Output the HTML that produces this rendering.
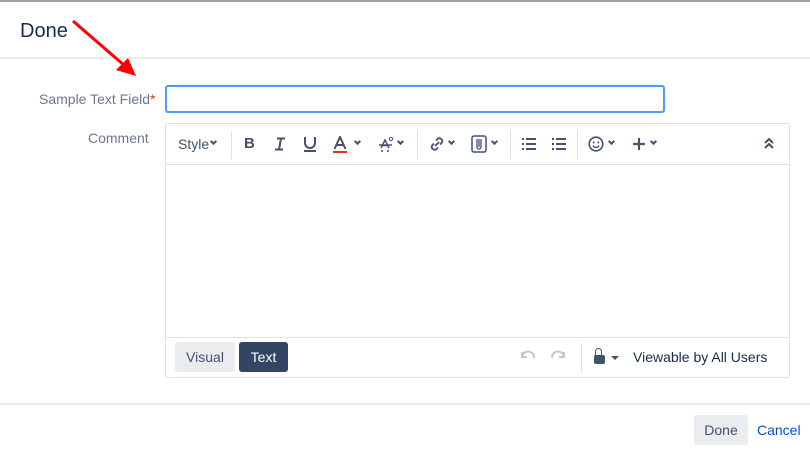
<!DOCTYPE html>
<html><head><style>
*{box-sizing:border-box;margin:0;padding:0}
body{width:810px;height:454px;background:#fff;font-family:"Liberation Sans",sans-serif;position:relative;overflow:hidden;color:#172b4d}
.a{position:absolute}
.ic{position:absolute;font-size:15px;color:#42526e;font-weight:bold}
.sep{position:absolute;width:1px;background:#dfe1e6}
.chev{position:absolute;width:5px;height:5px;border-right:2px solid #42526e;border-bottom:2px solid #42526e;transform:rotate(45deg)}
svg.s{position:absolute}
</style></head><body>
<div class="a" style="left:0;top:0;width:810px;height:2px;background:#9aa0a8"></div>
<div class="a" style="left:20px;top:20px;font-size:20px;color:#172b4d">Done</div>
<div class="a" style="left:0;top:57px;width:810px;height:2px;background:#ebecf0"></div>
<svg class="a" style="left:70px;top:18px" width="70" height="62"><line x1="3" y1="3" x2="55" y2="48" stroke="#f00" stroke-width="3"/><polygon points="66,58 46,52 58,40" fill="#f00"/></svg>
<div class="a" style="left:39px;top:91px;font-size:14px;color:#6b778c">Sample Text Field<span style="color:#de350b">*</span></div>
<div class="a" style="left:165px;top:85px;width:500px;height:28px;border:2px solid #4c9aff;border-radius:3px"></div>
<div class="a" style="left:88px;top:130px;font-size:14px;color:#6b778c">Comment</div>
<div class="a" style="left:165px;top:123px;width:625px;height:255px;border:1px solid #dfe1e6;border-radius:3px"></div>
<div class="a" style="left:166px;top:164px;width:623px;height:1px;background:#dfe1e6"></div>
<div class="a" style="left:166px;top:337px;width:623px;height:1px;background:#dfe1e6"></div>
<div class="a" style="left:178px;top:136px;font-size:14px;color:#42526e">Style</div><div class="chev" style="left:211px;top:139px"></div>
<div class="sep" style="left:231px;top:130px;height:29px"></div>
<div class="ic" style="left:244px;top:135px">B</div>
<svg class="s" style="left:274px;top:137px" width="12" height="14"><path d="M3 1.5h8M1 12.5h8M7 1.5L5 12.5" stroke="#42526e" stroke-width="2" fill="none"/></svg>
<svg class="s" style="left:303px;top:136px" width="14" height="16"><path d="M2 1v6a5 5 0 0 0 10 0V1M1 15h12" stroke="#42526e" stroke-width="2" fill="none"/></svg>
<svg class="s" style="left:333px;top:136px" width="14" height="18"><path d="M1.5 13L7 1l5.5 12M3.5 9h7" stroke="#42526e" stroke-width="2" fill="none"/><rect x="0" y="15" width="14" height="2" fill="#de350b"/></svg>
<div class="chev" style="left:355px;top:139px"></div>
<svg class="s" style="left:379px;top:136px" width="16" height="16"><path d="M2 12L6 4l4 8M3.5 9.5h5M0 9h13" stroke="#42526e" stroke-width="1.5" fill="none"/><circle cx="12" cy="3" r="1.6" stroke="#42526e" fill="none"/><path d="M2 15h2M8 15h2" stroke="#42526e" stroke-width="1.5"/></svg>
<div class="chev" style="left:398px;top:139px"></div>
<div class="sep" style="left:417px;top:130px;height:29px"></div>
<svg class="s" style="left:428px;top:136px" width="18" height="16"><path d="M7 10l4-4M8 4.5l2-2a3 3 0 0 1 4 4l-2 2M10 11.5l-2 2a3 3 0 0 1-4-4l2-2" stroke="#42526e" stroke-width="1.8" fill="none"/></svg>
<div class="chev" style="left:449px;top:139px"></div>
<svg class="s" style="left:471px;top:135px" width="16" height="18"><rect x="1" y="1" width="14" height="16" rx="2" stroke="#42526e" stroke-width="1.5" fill="none"/><path d="M6 4v8a2 2 0 0 0 4 0V4M8 4v8" stroke="#42526e" stroke-width="1.3" fill="none"/></svg>
<div class="chev" style="left:492px;top:139px"></div>
<div class="sep" style="left:510px;top:130px;height:29px"></div>
<svg class="s" style="left:522px;top:138px" width="14" height="12"><path d="M0 1h2M0 6h2M0 11h2M4 1h10M4 6h10M4 11h10" stroke="#42526e" stroke-width="2"/></svg>
<svg class="s" style="left:552px;top:138px" width="14" height="12"><path d="M0 1h2M0 6h2M0 11h2M4 1h10M4 6h10M4 11h10" stroke="#42526e" stroke-width="2"/></svg>
<div class="sep" style="left:577px;top:130px;height:29px"></div>
<svg class="s" style="left:588px;top:136px" width="16" height="16"><circle cx="8" cy="8" r="6.8" stroke="#42526e" stroke-width="1.6" fill="none"/><circle cx="5.7" cy="6.5" r="1" fill="#42526e"/><circle cx="10.3" cy="6.5" r="1" fill="#42526e"/><path d="M5 9.5a3.3 3.3 0 0 0 6 0" stroke="#42526e" stroke-width="1.4" fill="none"/></svg>
<div class="chev" style="left:609px;top:139px"></div>
<svg class="s" style="left:632px;top:137px" width="14" height="14"><path d="M7 1v12M1 7h12" stroke="#42526e" stroke-width="2.2"/></svg>
<div class="chev" style="left:651px;top:139px"></div>
<svg class="s" style="left:764px;top:138px" width="10" height="12"><path d="M1 5l4-4 4 4M1 10l4-4 4 4" stroke="#42526e" stroke-width="2" fill="none"/></svg>
<div class="a" style="left:175px;top:342px;width:60px;height:30px;background:#ebecf0;border-radius:3px;font-size:14px;color:#42526e;text-align:center;line-height:30px">Visual</div>
<div class="a" style="left:239px;top:342px;width:49px;height:30px;background:#344563;border-radius:3px;font-size:14px;color:#fff;text-align:center;line-height:30px">Text</div>
<svg class="s" style="left:520px;top:350px" width="16" height="10"><path d="M2 2v5h5M2 7a6 6 0 0 1 12 1" stroke="#c1c7d0" stroke-width="2" fill="none"/></svg>
<svg class="s" style="left:550px;top:350px" width="16" height="10"><path d="M14 2v5H9M14 7A6 6 0 0 0 2 8" stroke="#c1c7d0" stroke-width="2" fill="none"/></svg>
<div class="sep" style="left:581px;top:343px;height:29px"></div>
<div class="a" style="left:594px;top:355px;width:11px;height:9px;background:#42526e;border-radius:2px"></div>
<div class="a" style="left:595px;top:348px;width:7px;height:9px;border:1.5px solid #42526e;border-bottom:none;border-radius:4px 4px 0 0"></div>
<div class="a" style="left:611px;top:356px;border:4px solid transparent;border-top:4px solid #42526e"></div>
<div class="a" style="left:633px;top:349px;font-size:14px;color:#172b4d">Viewable by All Users</div>
<div class="a" style="left:0;top:403px;width:810px;height:2px;background:#ebecf0"></div>
<div class="a" style="left:694px;top:415px;width:54px;height:30px;background:#ebecf0;border-radius:3px;font-size:14px;color:#42526e;text-align:center;line-height:30px">Done</div>
<div class="a" style="left:757px;top:422px;font-size:14px;color:#0052cc">Cancel</div>
</body></html>
